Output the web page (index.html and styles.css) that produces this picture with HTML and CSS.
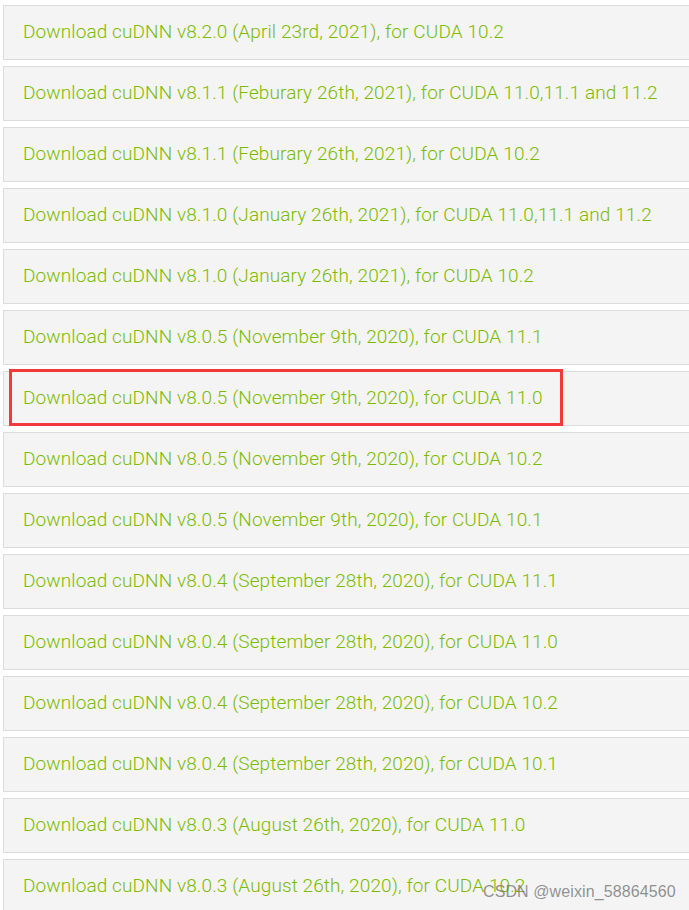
FILE: index.html
```html
<!DOCTYPE html>
<html lang="en">
<head>
    <meta charset="UTF-8">
    <title>cuDNN Archive</title>
    <link rel="stylesheet" href="styles.css">
</head>
<body>
    <div class="downloads">
        <a class="row" href="#">Download cuDNN v8.2.0 (April 23rd, 2021), for CUDA 10.2</a>
        <a class="row" href="#">Download cuDNN v8.1.1 (Feburary 26th, 2021), for CUDA 11.0,11.1 and 11.2</a>
        <a class="row" href="#">Download cuDNN v8.1.1 (Feburary 26th, 2021), for CUDA 10.2</a>
        <a class="row" href="#">Download cuDNN v8.1.0 (January 26th, 2021), for CUDA 11.0,11.1 and 11.2</a>
        <a class="row" href="#">Download cuDNN v8.1.0 (January 26th, 2021), for CUDA 10.2</a>
        <a class="row" href="#">Download cuDNN v8.0.5 (November 9th, 2020), for CUDA 11.1</a>
        <a class="row marked" href="#">Download cuDNN v8.0.5 (November 9th, 2020), for CUDA 11.0<span class="mark"></span></a>
        <a class="row" href="#">Download cuDNN v8.0.5 (November 9th, 2020), for CUDA 10.2</a>
        <a class="row" href="#">Download cuDNN v8.0.5 (November 9th, 2020), for CUDA 10.1</a>
        <a class="row" href="#">Download cuDNN v8.0.4 (September 28th, 2020), for CUDA 11.1</a>
        <a class="row" href="#">Download cuDNN v8.0.4 (September 28th, 2020), for CUDA 11.0</a>
        <a class="row" href="#">Download cuDNN v8.0.4 (September 28th, 2020), for CUDA 10.2</a>
        <a class="row" href="#">Download cuDNN v8.0.4 (September 28th, 2020), for CUDA 10.1</a>
        <a class="row" href="#">Download cuDNN v8.0.3 (August 26th, 2020), for CUDA 11.0</a>
        <a class="row" href="#">Download cuDNN v8.0.3 (August 26th, 2020), for CUDA 10.2</a>
    </div>
    <div class="watermark">CSDN @weixin_58864560</div>
</body>
</html>
```

FILE: styles.css
```css
html, body {
    margin: 0;
    padding: 0;
    overflow: hidden;
    background-color: #fff;
}
body {
    font-family: Roboto, "Liberation Sans", sans-serif;
    height: 910px;
    position: relative;
}
.downloads {
    padding: 5px 0 0 3px;
    display: flex;
    flex-direction: column;
    gap: 6px;
    width: 720px;
}
.row {
    position: relative;
    display: flex;
    align-items: center;
    box-sizing: border-box;
    height: 55px;
    padding-left: 19px;
    padding-bottom: 2px;
    border: 1px solid #dcdcdc;
    background-color: #f4f4f4;
    color: #7cbb00;
    font-size: 19px;
    font-weight: 300;
    letter-spacing: 0.1px;
    text-decoration: none;
    white-space: nowrap;
}
.mark {
    position: absolute;
    left: 5px;
    top: -3px;
    width: 548px;
    height: 51px;
    border: 3px solid #f23a3a;
}
.watermark {
    position: absolute;
    left: 483px;
    top: 883px;
    font-size: 16px;
    color: rgba(110, 110, 110, 0.75);
    font-family: "Liberation Sans", Arial, sans-serif;
    letter-spacing: 0.1px;
}
```
